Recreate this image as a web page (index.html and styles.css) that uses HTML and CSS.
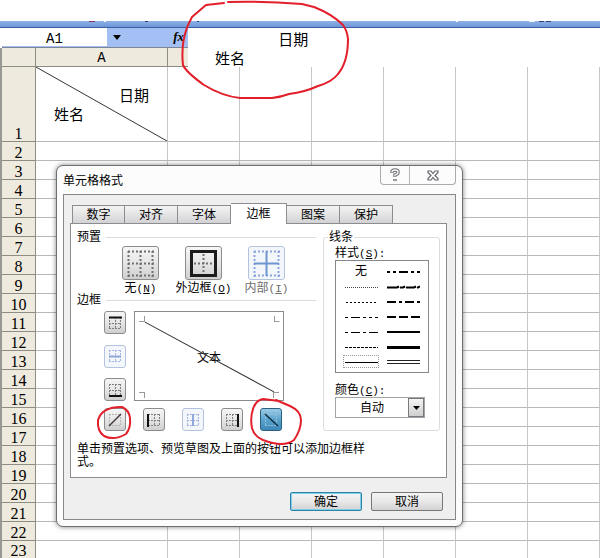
FILE: index.html
```
<!DOCTYPE html>
<html lang="zh-CN">
<head>
    <meta charset="UTF-8">
    <meta name="viewport" content="width=device-width, initial-scale=1.0">
    <title>单元格格式</title>
    <link rel="stylesheet" href="styles.css">
</head>
<body>
    <div class="workbook">
        <div class="toolbar">
            <svg width="600" height="2" aria-hidden="true">
                <path d="M89 0.5h6" stroke="#86306a"/>
                <path d="M145 0.5h3M197 0.5h2M539 0.5h5M546 0.5h5" stroke="#2d4272"/>
                <path d="M104 0.5h2M456 0.5h2M529 0.5h6" stroke="#eef3fc"/>
            </svg>
        </div>
        <div class="formula-bar">
            <input class="name-box" type="text" value="A1" aria-label="名称框">
            <button class="name-arrow" type="button" aria-label="名称列表">
                <svg width="8" height="5"><path d="M0 0h8L4 5z"/></svg>
            </button>
            <button class="fx" type="button">fx</button>
            <textarea class="formula" aria-label="编辑栏">　　　　 日期
姓名</textarea>
        </div>

        <table class="sheet">
            <colgroup>
                <col class="col-num"><col class="col-a"><col class="col-cell"><col class="col-cell"><col class="col-cell"><col class="col-cell"><col class="col-cell"><col>
            </colgroup>
            <thead>
                <tr><th></th><th>A</th><th></th><th></th><th></th><th></th><th></th><th></th></tr>
            </thead>
            <tbody id="rows">
                <tr class="first">
                    <th>1</th>
                    <td class="split">
                        <svg viewBox="0 0 132 75" preserveAspectRatio="none" aria-hidden="true"><path d="M0 0L132 75" stroke="#333" fill="none"/></svg>
                        <div class="split-date">日期</div>
                        <div class="split-name">姓名</div>
                    </td>
                    <td></td><td></td><td></td><td></td><td></td><td></td>
                </tr>
            </tbody>
        </table>

        <div class="dialog" role="dialog" aria-labelledby="dialogTitle">
            <div class="title-bar">
                <span id="dialogTitle">单元格格式</span>
                <div class="window-buttons">
                    <button type="button" aria-label="帮助">
                        <svg width="12" height="14" viewBox="0 0 12 14"><path d="M3 5V4q0-2 3-2t3 2v1q0 1-3 2v2M6 11v2" fill="none" stroke="#6c6c74" stroke-width="3.400"/><path d="M3 4.500V4q0-2 3-2t3 2v1q0 1-3 2v1.500M6 11.500v1" fill="none" stroke="#fff" stroke-width="1.300"/></svg>
                    </button>
                    <button type="button" class="close" aria-label="关闭">
                        <svg width="12" height="11" viewBox="0 0 12 11"><path d="M1 1h3l2 2.500L8 1h3v1.500L8 5.500l3 3V10H8L6 7.500 4 10H1V8.500l3-3-3-3z" fill="#fff" stroke="#66666e" stroke-width="1.200"/></svg>
                    </button>
                </div>
            </div>
            <div class="client">
                <div class="tabs" role="tablist">
                    <button type="button" role="tab">数字</button>
                    <button type="button" role="tab">对齐</button>
                    <button type="button" role="tab">字体</button>
                    <button type="button" role="tab" class="active" aria-selected="true">边框</button>
                    <button type="button" role="tab">图案</button>
                    <button type="button" role="tab">保护</button>
                </div>
                <div class="page">
                    <div class="columns">
                        <div class="left">
                            <div class="heading">预置</div>
                            <div class="presets">
                                <div class="preset">
                                    <button type="button" id="presetNone">
                                        <svg width="29" height="29"><path d="M2.500 2v26M14.500 2v26M26.500 2v26M2 2.500h26M2 14.500h26M2 26.500h26" stroke="#707070" stroke-width="2" stroke-dasharray="2 2"/></svg>
                                    </button>
                                    <label for="presetNone">无<span class="key">(<u>N</u>)</span></label>
                                </div>
                                <div class="preset">
                                    <button type="button" id="presetOutline">
                                        <svg width="29" height="29"><path d="M14.500 5v20M5 14.500h20" stroke="#707070" stroke-width="2" stroke-dasharray="2 2"/><rect x="2.500" y="2.500" width="24" height="24" fill="none" stroke="#1c1c1c" stroke-width="3"/></svg>
                                    </button>
                                    <label for="presetOutline">外边框<span class="key">(<u>O</u>)</span></label>
                                </div>
                                <div class="preset">
                                    <button type="button" id="presetInside" disabled>
                                        <svg width="29" height="29"><path d="M2.500 2v26M26.500 2v26M2 2.500h26M2 26.500h26" stroke="#8ba6dd" stroke-width="2" stroke-dasharray="2 2"/><path d="M14.500 2v25M2 14.500h25" stroke="#6f96cf" stroke-width="2"/></svg>
                                    </button>
                                    <label for="presetInside" class="off">内部<span class="key">(<u>I</u>)</span></label>
                                </div>
                            </div>
                            <div class="heading">边框</div>
                            <div class="editor">
                                <div class="side">
                                    <button type="button" class="edge" aria-label="上边框"><svg width="16" height="16"><path d="M2.500 2v12M8.500 2v12M13.500 2v12M2 8.500h12M2 13.500h12" stroke="#808080" stroke-dasharray="2 1"/><path d="M2 2.500h13" stroke="#111" stroke-width="2"/></svg></button>
                                    <button type="button" class="edge" disabled aria-label="内部横线"><svg width="16" height="16"><path d="M2.500 2v12M8.500 2v12M13.500 2v12M2 2.500h12M2 13.500h12" stroke="#a5b5df" stroke-dasharray="2 1"/><path d="M2 8.500h12" stroke="#91a8da" stroke-width="2"/></svg></button>
                                    <button type="button" class="edge" aria-label="下边框"><svg width="16" height="16"><path d="M2.500 2v12M8.500 2v12M13.500 2v12M2 2.500h12M2 8.500h12" stroke="#808080" stroke-dasharray="2 1"/><path d="M2 14h13" stroke="#111" stroke-width="2"/></svg></button>
                                </div>
                                <div class="preview">
                                    <svg viewBox="0 0 148 87" preserveAspectRatio="none" aria-hidden="true">
                                        <path d="M9.500 4v5.500H4M139.500 4v5.500h5M4 79.500h5.500V85M144 79.500h-5.500V85" fill="none" stroke="#999"/>
                                        <path d="M10 10L139 79" stroke="#333"/>
                                    </svg>
                                    <span>文本</span>
                                </div>
                            </div>
                            <div class="bottom">
                                <button type="button" class="edge" aria-label="左斜线"><svg width="16" height="16"><path d="M2.500 2v12M13.500 2v12M2 2.500h12M2 13.500h12" stroke="#b5b5b5" stroke-dasharray="2 1"/><path d="M2 14L14 2" stroke="#443838" stroke-width="1.500"/></svg></button>
                                <button type="button" class="edge" aria-label="左边框"><svg width="16" height="16"><path d="M8.500 2v12M13.500 2v12M2 2.500h12M2 8.500h12M2 13.500h12" stroke="#808080" stroke-dasharray="2 1"/><path d="M2 2v13" stroke="#111" stroke-width="2"/></svg></button>
                                <button type="button" class="edge" disabled aria-label="内部竖线"><svg width="16" height="16"><path d="M2.500 2v12M13.500 2v12M2 2.500h12M2 8.500h12M2 13.500h12" stroke="#a5b5df" stroke-dasharray="2 1"/><path d="M8 2v12" stroke="#91a8da" stroke-width="2"/></svg></button>
                                <button type="button" class="edge" aria-label="右边框"><svg width="16" height="16"><path d="M2.500 2v12M8.500 2v12M2 2.500h12M2 8.500h12M2 13.500h12" stroke="#808080" stroke-dasharray="2 1"/><path d="M14 2v13" stroke="#111" stroke-width="2"/></svg></button>
                                <button type="button" class="edge pressed" aria-pressed="true" aria-label="右斜线"><svg width="16" height="16"><path d="M2.500 2v12M13.500 2v12M2 2.500h12M2 13.500h12" stroke="#8fc0dc" stroke-dasharray="2 1"/><path d="M2 2L15 14" stroke="#102c40" stroke-width="1.500"/></svg></button>
                            </div>
                        </div>
                        <fieldset class="lines">
                            <legend>线条</legend>
                            <div class="caption" id="styleLabel">样式<span class="key">(<u>S</u>):</span></div>
                            <div class="styles" role="group" aria-labelledby="styleLabel">
                                <button type="button">无</button>
                                <button type="button" aria-label="双点划线"><svg width="33" height="4"><path d="M0 2h33" stroke="#000" stroke-width="2" stroke-dasharray="3 3 3 3 9 3"/></svg></button>
                                <button type="button" aria-label="点线"><svg width="33" height="4"><path d="M0 2.500h33" stroke="#444" stroke-dasharray="1 1"/></svg></button>
                                <button type="button" aria-label="斜点划线"><svg width="33" height="4"><path d="M0 2.500h10l2-1M13 2.500h3l2-1M19 2.500h8l2-1M30 2.500h1l2-1" fill="none" stroke="#000" stroke-width="2"/></svg></button>
                                <button type="button" aria-label="短虚线"><svg width="33" height="4"><path d="M1 2.500h32" stroke="#000" stroke-dasharray="2 2"/></svg></button>
                                <button type="button" aria-label="粗点划线"><svg width="33" height="4"><path d="M0 2h33" stroke="#000" stroke-width="2" stroke-dasharray="9 3 3 3"/></svg></button>
                                <button type="button" aria-label="细双点划线"><svg width="33" height="4"><path d="M0 2.500h33" stroke="#000" stroke-dasharray="3 3 9 3 3 3"/></svg></button>
                                <button type="button" aria-label="粗虚线"><svg width="33" height="4"><path d="M0 2h33" stroke="#000" stroke-width="2" stroke-dasharray="9 3"/></svg></button>
                                <button type="button" aria-label="细点划线"><svg width="33" height="4"><path d="M0 2.500h33" stroke="#000" stroke-dasharray="3 3 9 3"/></svg></button>
                                <button type="button" aria-label="中实线"><svg width="33" height="4"><path d="M0 2h33" stroke="#000" stroke-width="2"/></svg></button>
                                <button type="button" aria-label="细虚线"><svg width="33" height="4"><path d="M0 2.500h33" stroke="#000" stroke-dasharray="3 1"/></svg></button>
                                <button type="button" aria-label="粗实线"><svg width="33" height="4"><path d="M0 2.500h33" stroke="#000" stroke-width="3"/></svg></button>
                                <button type="button" class="picked" aria-label="细实线"><svg width="33" height="4"><path d="M0 2.500h33" stroke="#000"/></svg></button>
                                <button type="button" aria-label="双线"><svg width="33" height="4"><path d="M0 0.500h33M0 3.500h33" stroke="#222"/></svg></button>
                            </div>
                            <label class="caption color-label" for="color">颜色<span class="key">(<u>C</u>):</span></label>
                            <div class="color">
                                <select id="color"><option>自动</option></select>
                                <span class="drop"><svg width="7" height="4"><path d="M0 0h7L3.500 4z"/></svg></span>
                            </div>
                        </fieldset>
                    </div>
                    <p class="hint">单击预置选项、预览草图及上面的按钮可以添加边框样式。</p>
                </div>
                <div class="actions">
                    <button type="button" class="default">确定</button>
                    <button type="button">取消</button>
                </div>
            </div>
        </div>

        <!-- hand drawn marks -->
        <svg class="marks" width="600" height="558" aria-hidden="true">
            <path d="M224 3L206 5L192 17Q180 38 183 65Q186 72 204 85Q222 96 240 98H272Q281 97 289 94Q305 92 318 86Q332 82 338 74Q348 62 348 39Q347 30 343 25Q332 14 314 7L302 4Q264 1 228 2"/>
            <path d="M121 407Q102 407 98 420Q97 431 104 436Q114 441 126 434Q131 428 130 418Q129 410 122 407"/>
            <path d="M279 401L263 399Q256 400 253 409Q250 418 252 428Q254 436 263 440Q284 448 294 440Q301 430 301 420Q301 411 290 406L276 400"/>
        </svg>
    </div>

    <script>
        // Fill in the empty rows under the first one
        const rows = document.getElementById("rows");
        for (let i = 2; i <= 23; i++) {
            const row = document.createElement("tr");
            const head = document.createElement("th");
            head.textContent = i;
            row.appendChild(head);
            for (let j = 0; j < 7; j++) {
                row.appendChild(document.createElement("td"));
            }
            rows.appendChild(row);
        }
    </script>
</body>
</html>
```

FILE: styles.css
```
* {
    box-sizing: border-box;
}
body {
    margin: 0;
    background-color: #fff;
    color: #000;
    font-family: "Liberation Sans", "Noto Sans CJK SC", sans-serif;
    font-size: 12px;
}
button, input, select, textarea {
    font: inherit;
    color: inherit;
    margin: 0;
    padding: 0;
    border: none;
    border-radius: 0;
    background: none;
}
svg {
    display: block;
    flex: none;
}
.workbook {
    position: relative;
    min-height: 100vh;
    padding-top: 21px;
    overflow: hidden;
}
.toolbar {
    height: 7px;
    background: linear-gradient(#8fb2e6, #6f98d8 80%, #3f5fa6 90%);
    overflow: hidden;
}
.formula-bar {
    position: relative;
    display: flex;
    height: 20px;
    margin-left: 2px;
    padding-bottom: 1px;
    background-color: #a3bff3;
    border-bottom: 1px solid #7d8697;
}
.name-box {
    width: 105px;
    padding-top: 3px;
    background-color: #fff;
    font-family: "Liberation Mono", monospace;
    font-size: 14px;
    text-align: center;
}
.name-arrow {
    width: 20px;
    display: flex;
    align-items: center;
    justify-content: center;
}
.fx {
    width: 61px;
    padding-right: 4px;
    text-align: right;
    font-family: "Liberation Serif", serif;
    font-style: italic;
    font-weight: bold;
    font-size: 13px;
}
/* expanded editing box, covers the column headers */
.formula {
    position: absolute;
    left: 186px;
    right: 0;
    top: 0;
    height: 39px;
    padding: 1px 0 0 27px;
    background-color: #fff;
    font-family: "Noto Sans CJK SC", sans-serif;
    font-size: 15px;
    line-height: 19px;
    white-space: pre;
    resize: none;
    overflow: hidden;
}
.sheet {
    width: 100%;
    border-left: 2px solid #9a9a94;
    border-collapse: separate;
    border-spacing: 0;
    table-layout: fixed;
}
.col-num {
    width: 34px;
}
.col-a {
    width: 132px;
}
.col-cell {
    width: 72px;
}
.sheet th, .sheet td {
    height: 19px;
    padding: 0;
    border-right: 1px solid #c6c6c6;
    border-bottom: 1px solid #b8b8b8;
}
.sheet th {
    padding-top: 3px;
    background-color: #eeeadd;
    border-color: #8d8d86;
    font-family: "Liberation Serif", serif;
    font-size: 16px;
    font-weight: normal;
    line-height: 15px;
    vertical-align: bottom;
}
.sheet thead th {
    font-family: "Liberation Mono", monospace;
    font-size: 14px;
}
.sheet .first th, .sheet .first td {
    height: 75px;
}
.sheet tbody tr:last-child th, .sheet tbody tr:last-child td {
    height: 17px;
    padding-top: 2px;
    border-bottom: none;
}
.sheet .split {
    position: relative;
    padding: 0 18px;
    font-family: "Noto Sans CJK SC", sans-serif;
    font-size: 15px;
    line-height: 19px;
}
.split svg {
    position: absolute;
    left: 0;
    top: 0;
    width: 100%;
    height: 100%;
}
.split-date {
    text-align: right;
}

/* dialog */
.dialog {
    position: absolute;
    left: 56px;
    top: 165px;
    width: 407px;
    padding: 0 6px 6px;
    background-color: #fcfcfc;
    border: 1px solid #6f6f6f;
    border-radius: 7px;
    box-shadow: 0 0 5px rgba(0, 0, 0, 0.5);
}
.title-bar {
    display: flex;
    justify-content: space-between;
    height: 28px;
    line-height: 30px;
}
.window-buttons {
    display: flex;
    height: 19px;
    border: 1px solid #a9a9ae;
    border-top: none;
    border-radius: 0 0 4px 4px;
}
.window-buttons button {
    width: 28px;
    display: flex;
    align-items: center;
    justify-content: center;
}
.window-buttons .close {
    width: 46px;
    border-left: 1px solid #b5b5ba;
}
.client {
    padding: 8px 8px 8px 6px;
    background-color: #efefef;
    border: 1px solid #85878a;
}
.tabs {
    display: flex;
    align-items: flex-end;
    height: 20px;
    padding-left: 2px;
}
.tabs button {
    width: 53px;
    height: 18px;
    padding-top: 1px;
    line-height: 17px;
    border: 1px solid #8b8d91;
    border-bottom: none;
    border-left-width: 0;
    background: linear-gradient(#f4f4f4, #e4e4e5 50%, #d2d2d4);
}
.tabs button:first-child {
    border-left-width: 1px;
}
/* the selected tab opens into the page */
.tabs .active {
    position: relative;
    width: 56px;
    height: 21px;
    margin-bottom: -1px;
    background: #fff;
}
.page {
    padding: 6px 6px 8px;
    background-color: #fff;
    border: 1px solid #8b8d91;
}
.columns {
    display: flex;
    gap: 7px;
}
.left {
    flex: 1;
}
.heading {
    display: flex;
    align-items: center;
    gap: 5px;
    height: 14px;
    line-height: 14px;
}
.heading::after {
    content: "";
    flex: 1;
    height: 1px;
    background-color: #dcdcdc;
}
.presets {
    display: flex;
    padding: 2px 0 0 32px;
}
.preset {
    width: 63px;
    display: flex;
    flex-direction: column;
    align-items: center;
    white-space: nowrap;
}
.preset button, .edge {
    display: flex;
    align-items: center;
    justify-content: center;
    border: 1px solid #8c8c8c;
    border-radius: 3px;
    background: linear-gradient(#f6f6f6, #e6e6e6 50%, #cfcfcf);
}
.preset button {
    width: 37px;
    height: 34px;
}
.preset button:disabled, .edge:disabled {
    border-color: #b4c3dd;
    background: #f3f6fb;
}
.preset label {
    height: 13px;
    line-height: 17px;
}
.off {
    color: #6d6d6d;
}
.key {
    font-family: "Liberation Mono", monospace;
    font-size: 11px;
}
.editor {
    display: flex;
    gap: 8px;
    padding: 4px 32px 0 27px;
}
.side {
    display: flex;
    flex-direction: column;
    justify-content: space-between;
}
.edge {
    width: 22px;
    height: 23px;
}
.preview {
    position: relative;
    flex: 1;
    height: 90px;
    display: flex;
    align-items: center;
    justify-content: center;
    border: 1px solid #8b8b8b;
}
.preview svg {
    position: absolute;
    left: 0;
    top: 0;
    width: 100%;
    height: 100%;
}
.bottom {
    display: flex;
    gap: 17px;
    padding: 7px 0 0 27px;
}
.edge.pressed {
    border-color: #2a5f80;
    background: linear-gradient(#9ccbe6, #5ba3cd 50%, #3d88b8);
}
.lines {
    min-width: 0;
    width: 117px;
    margin: 0;
    padding: 0 10px 0 11px;
    border: 1px solid #dcdcdc;
    border-radius: 3px;
}
.lines legend {
    margin-left: -7px;
    padding: 0 1px;
    height: 14px;
    line-height: 14px;
}
.caption {
    display: block;
    height: 16px;
    line-height: 18px;
}
.styles {
    display: grid;
    grid-template-columns: 1fr 1fr;
    padding: 3px 4px;
    border: 1px solid #85878a;
}
.styles button {
    display: flex;
    align-items: center;
    justify-content: center;
    height: 15px;
    line-height: 15px;
}
.styles .picked {
    margin: 1px 3px;
    height: 13px;
    border: 1px dotted #999;
}
.color-label {
    margin-top: 8px;
}
.color {
    position: relative;
    width: 90px;
    height: 21px;
    border: 1px solid #a2a4a8;
}
.color select {
    width: 100%;
    height: 19px;
    padding: 1px 16px 0 0;
    appearance: none;
    text-align: center;
    text-align-last: center;
}
.drop {
    position: absolute;
    right: 0;
    top: 0;
    width: 16px;
    height: 19px;
    display: flex;
    align-items: center;
    justify-content: center;
    border: 1px solid #77797c;
    background: linear-gradient(#f4f4f4, #cfcfcf);
    pointer-events: none;
}
.hint {
    width: 296px;
    margin: 12px 0 0;
    line-height: 13px;
}
.actions {
    display: flex;
    justify-content: flex-end;
    gap: 9px;
    padding: 14px 4px 0 0;
}
.actions button {
    width: 72px;
    height: 19px;
    padding-top: 1px;
    line-height: 17px;
    border: 1px solid #777;
    border-radius: 2px;
    background: linear-gradient(#f5f5f5, #e8e8e8 50%, #d2d2d2);
}
.actions .default {
    border-color: #2f83a8;
    box-shadow: inset 0 0 0 1px #7fcfe8;
}
.marks {
    position: absolute;
    left: 0;
    top: 0;
    pointer-events: none;
}
.marks path {
    fill: none;
    stroke: #e21f2a;
    stroke-width: 2;
    stroke-linejoin: round;
    stroke-linecap: round;
}
```
